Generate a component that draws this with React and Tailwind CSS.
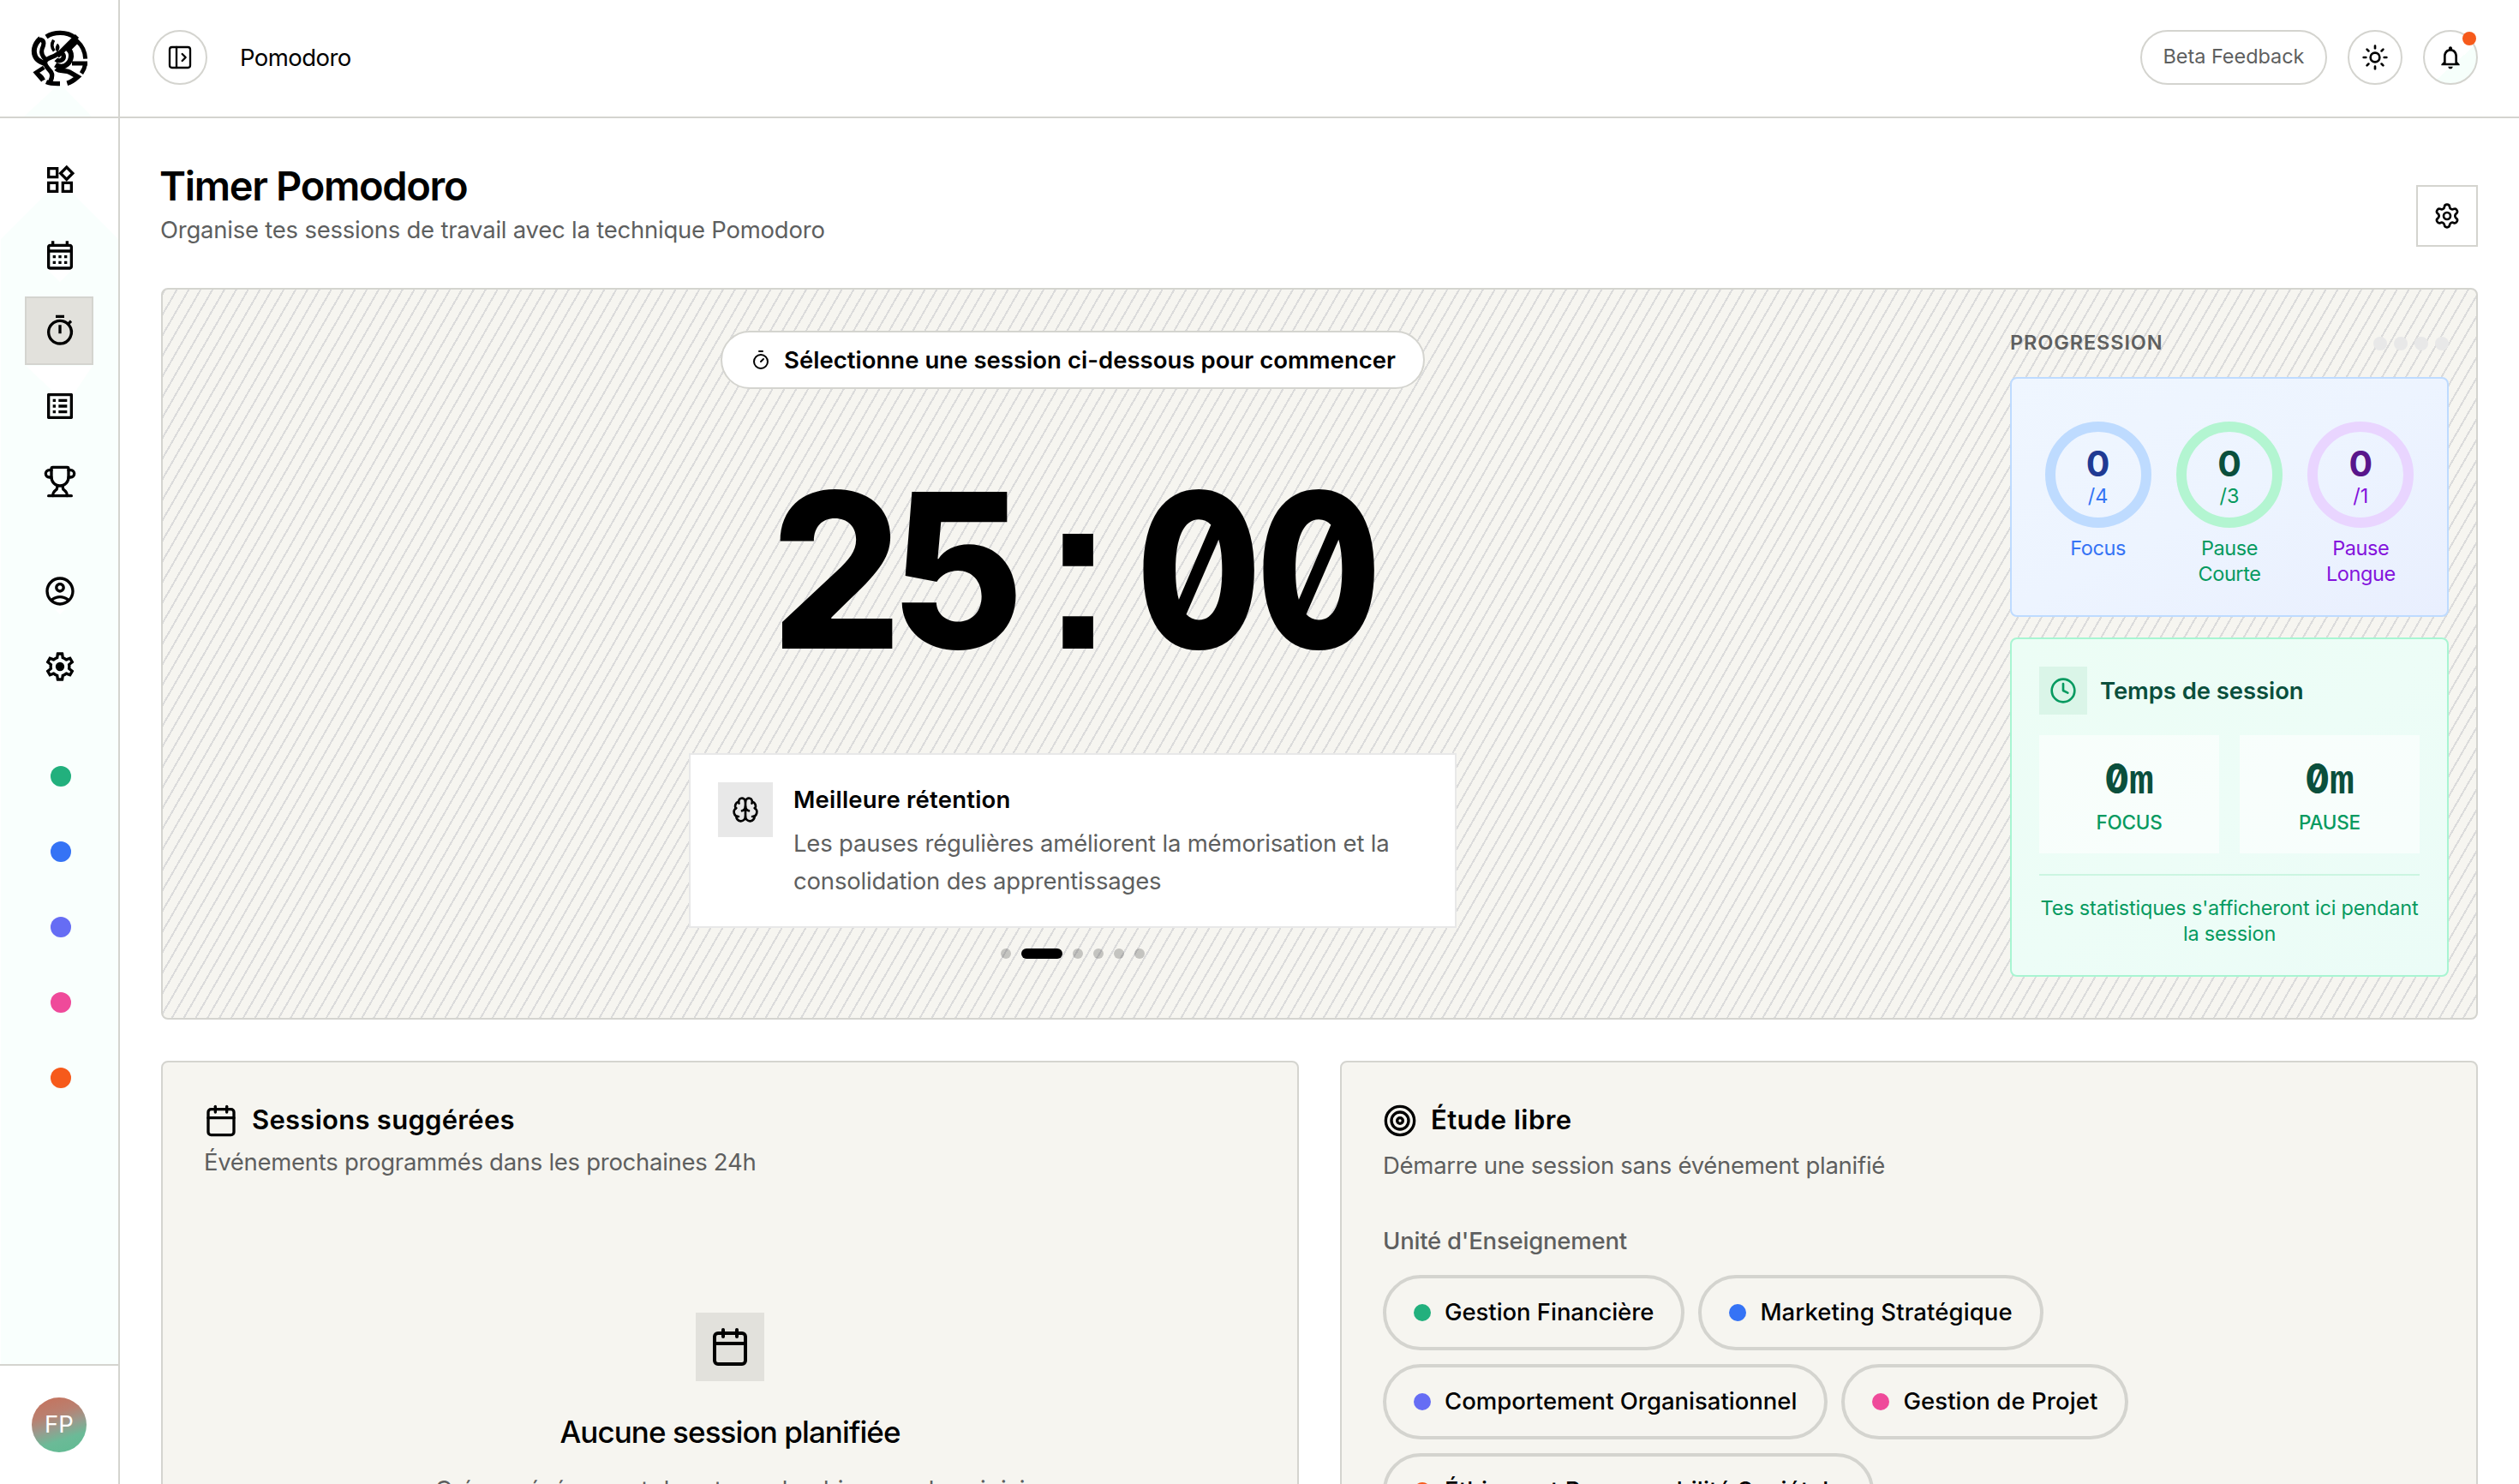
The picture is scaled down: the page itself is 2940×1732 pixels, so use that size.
import React, { useState } from "react";
import { Brain, Calendar, Clock, PanelLeftOpen, Settings, Sun, Target, Timer, Trophy } from "lucide-react";
import {
  MdOutlineWidgets,
  MdOutlineCalendarMonth,
  MdOutlineTimer,
  MdOutlineListAlt,
  MdOutlineAccountCircle,
  MdNotificationsNone,
} from "react-icons/md";

const courses = [
  { name: "Gestion Financière", dot: "bg-[#22b07d]", tracking: "tracking-[-0.002em]" },
  { name: "Marketing Stratégique", dot: "bg-[#3573f5]", tracking: "tracking-[0.004em]" },
  { name: "Comportement Organisationnel", dot: "bg-[#666df4]", tracking: "tracking-[-0.0005em]" },
  { name: "Gestion de Projet", dot: "bg-[#ef4a9a]", tracking: "tracking-[0.003em]" },
  { name: "Éthique et Responsabilité Sociétale", dot: "bg-[#f65a1b]", tracking: "tracking-[0.0045em]" },
];

const rings = [
  { label: "Focus", total: 4, stroke: "stroke-[#bedbff]", value: "text-[#1f3a93]", text: "text-[#3573f5]" },
  { label: "Pause Courte", total: 3, stroke: "stroke-[#b3f5d1]", value: "text-[#0a4f3c]", text: "text-[#069a60]" },
  { label: "Pause Longue", total: 1, stroke: "stroke-[#e9d5ff]", value: "text-[#59168b]", text: "text-[#8413dc]" },
];

function Logo() {
  return (
    <svg viewBox="0 0 216 216" className="size-[72px]" fill="none" stroke="black" strokeWidth="16">
      <path d="M60 33 C86 15 132 13 160 36" />
      <path d="M168 30 L98 100" strokeWidth="18" />
      <path d="M86 44 C77 58 78 70 88 82" strokeWidth="11" />
      <path d="M99 56 C110 64 108 76 98 86 C89 76 92 66 99 56Z" fill="black" stroke="none" />
      <path d="M40 38 C16 60 12 86 24 106 C31 118 42 121 56 127" strokeWidth="18" />
      <path d="M38 42 C58 46 50 64 45 76 C41 90 47 102 58 112" strokeWidth="15" />
      <path d="M132 84 L168 48 C186 64 196 86 197 110" strokeWidth="15" />
      <path d="M140 78 C154 96 146 124 126 134 C110 141 100 136 92 131" strokeWidth="18" />
      <path
        d="M94 112 C104 122 122 114 121 100 C119 88 104 88 96 95 C84 106 62 105 56 120 C53 134 67 142 77 157 C86 172 76 182 72 194"
        strokeWidth="16"
      />
      <path d="M60 191 C76 198 90 197 108 197" />
      <path d="M94 144 C108 157 130 148 144 158 L170 173 C158 184 150 191 133 196" strokeWidth="17" />
      <path d="M150 126 L204 126" strokeWidth="15" />
      <path d="M197 126 C195 141 190 151 183 161" strokeWidth="15" />
      <path d="M52 140 L24 158 L48 186" strokeWidth="14" />
      <path d="M26 158 C34 164 46 168 52 184" strokeWidth="10" />
    </svg>
  );
}

function SettingsGear() {
  return (
    <svg viewBox="0 0 24 24" className="size-10" fill="currentColor">
      <path
        fillRule="evenodd"
        d="M19.43 12.98c.04-.32.07-.64.07-.98 0-.34-.03-.66-.07-.98l2.11-1.65c.19-.15.24-.42.12-.64l-2-3.46a.5.5 0 0 0-.61-.22l-2.49 1c-.52-.4-1.08-.73-1.69-.98l-.38-2.65A.488.488 0 0 0 14 2h-4c-.25 0-.46.18-.49.42l-.38 2.65c-.61.25-1.17.59-1.69.98l-2.49-1a.566.566 0 0 0-.18-.03c-.17 0-.34.09-.43.25l-2 3.46c-.13.22-.07.49.12.64l2.11 1.65c-.04.32-.07.65-.07.98 0 .33.03.66.07.98l-2.11 1.65c-.19.15-.24.42-.12.64l2 3.46a.5.5 0 0 0 .61.22l2.49-1c.52.4 1.08.73 1.69.98l.38 2.65c.03.24.24.42.49.42h4c.25 0 .46-.18.49-.42l.38-2.65c.61-.25 1.17-.59 1.69-.98l2.49 1c.06.02.12.03.18.03.17 0 .34-.09.43-.25l2-3.46c.12-.22.07-.49-.12-.64l-2.11-1.65zm-1.98-1.71c.04.31.05.52.05.73 0 .21-.02.43-.05.73l-.14 1.13.89.7 1.08.84-.7 1.21-1.27-.51-1.04-.42-.9.68c-.43.32-.84.56-1.25.73l-1.06.43-.16 1.13-.2 1.35h-1.4l-.19-1.35-.16-1.13-1.06-.43c-.43-.18-.83-.41-1.23-.71l-.91-.7-1.06.43-1.27.51-.7-1.21 1.08-.84.89-.7-.14-1.13c-.03-.31-.05-.54-.05-.74s.02-.43.05-.73l.14-1.13-.89-.7-1.08-.84.7-1.21 1.27.51 1.04.42.9-.68c.43-.32.84-.56 1.25-.73l1.06-.43.16-1.13.2-1.35h1.39l.19 1.35.16 1.13 1.06.43c.43.18.83.41 1.23.71l.91.7 1.06-.43 1.27-.51.7 1.21-1.07.85-.89.7.14 1.13z"
      />
      <circle cx="12" cy="12" r="3.1" />
    </svg>
  );
}

function MonoText({ text, cell }) {
  return (
    <span className="flex items-baseline justify-center">
      {text.split("").map((char, i) => (
        <span key={i} className={`flex justify-center ${cell}`}>
          {char === "0" ? (
            <span className="block scale-x-[0.84] font-extrabold slashed-zero">{char}</span>
          ) : /\d/.test(char) ? (
            <span className="block scale-x-[0.95] font-extrabold">{char}</span>
          ) : (
            <span className="block font-['Liberation_Mono',monospace] font-bold">{char}</span>
          )}
        </span>
      ))}
    </span>
  );
}

function NavItem({ active, children }) {
  return (
    <a
      className={`flex size-20 items-center justify-center pl-[2px] ${
        active ? "border-2 border-[#d4d4cf] bg-[#e2e1dc]" : ""
      }`}
    >
      {children}
    </a>
  );
}

function Sidebar() {
  return (
    <aside className="relative flex w-[140px] shrink-0 flex-col border-r-2 border-[#d4d4cf] bg-white">
      <svg className="absolute top-0 left-0 h-[1592px] w-[138px]" viewBox="0 0 138 1592" fill="#f9fffd">
        <path d="M67 100 L28 136 H107 L72 100Z" />
        <path
          fillRule="evenodd"
          d="M54 226 L1 279 V1592 H138 V279 L85 226Z M55 315 L70 329 L84 315Z M30 427 L78 472 L108 427Z M64 711 L70 717 L76 711Z M64 797 L70 803 L76 797Z"
        />
      </svg>
      <div className="relative flex h-[138px] items-center justify-center border-b-2 border-[#d4d4cf] pl-[2px]">
        <Logo />
      </div>
      <nav className="relative flex flex-1 flex-col items-center gap-2 pt-8">
        <NavItem>
          <MdOutlineWidgets size={40} />
        </NavItem>
        <NavItem>
          <MdOutlineCalendarMonth size={40} />
        </NavItem>
        <NavItem active>
          <MdOutlineTimer size={40} />
        </NavItem>
        <NavItem>
          <MdOutlineListAlt size={40} />
        </NavItem>
        <NavItem>
          <Trophy size={40} />
        </NavItem>
        <div className="h-8" />
        <NavItem>
          <MdOutlineAccountCircle size={40} />
        </NavItem>
        <NavItem>
          <SettingsGear />
        </NavItem>
        <div className="h-8" />
        {courses.map((course) => (
          <NavItem key={course.name}>
            <span className={`ml-[2px] size-6 rounded-full ${course.dot}`} />
          </NavItem>
        ))}
      </nav>
      <div className="relative flex h-[140px] items-center justify-center border-t-2 border-[#d4d4cf]">
        <div className="flex size-16 items-center justify-center rounded-full bg-[linear-gradient(162deg,#c4745f_8%,#b98070_32%,#999b8e_52%,#6bba97_72%,#5fbb92_100%)] text-[27.5px] text-white">
          FP
        </div>
      </div>
    </aside>
  );
}

function TopBar() {
  return (
    <header className="flex h-[138px] shrink-0 items-center justify-between border-b-2 border-[#d4d4cf] pr-12 pb-[2px] pl-[38px]">
      <div className="flex items-center">
        <button className="flex size-16 items-center justify-center rounded-full border-2 border-[#d4d4cf]">
          <PanelLeftOpen size={32} strokeWidth={1.75} />
        </button>
        <span className="ml-[38px] pt-[2px] text-[27.5px] tracking-[-0.02em]">Pomodoro</span>
      </div>
      <div className="flex items-center gap-6">
        <button className="flex h-16 w-[218px] items-center justify-center rounded-full border-2 border-[#d4d4cf] pb-[2px] text-[23.5px] tracking-[-0.002em] text-[#5e5f5f]">
          Beta Feedback
        </button>
        <button className="flex size-16 items-center justify-center rounded-full border-2 border-[#d4d4cf]">
          <Sun size={32} />
        </button>
        <button className="relative flex size-16 items-center justify-center rounded-full border-2 border-[#d4d4cf] bg-[linear-gradient(138deg,transparent_60%,#f6fffb_60%)]">
          <MdNotificationsNone size={32} />
          <span className="absolute top-0 right-0 size-4 rounded-full bg-[#f65a1b]" />
        </button>
      </div>
    </header>
  );
}

function TimerPanel() {
  const [tip] = useState(1);
  return (
    <div className="flex flex-1 flex-col items-center pt-4">
      <div className="flex h-[68px] w-[822px] items-center rounded-full border-2 border-[#d4d4cf] bg-white pl-[33px]">
        <Timer size={24} />
        <span className="ml-[15px] pt-[1px] text-[27.5px] font-semibold tracking-[0.001em] whitespace-nowrap">
          Sélectionne une session ci-dessous pour commencer
        </span>
      </div>
      <div className="mt-[84px] h-64 pl-3 text-[252px] leading-[256px]">
        <MonoText text="25:00" cell="w-[140.8px]" />
      </div>
      <div className="mt-[85px] flex h-[204px] w-[896px] gap-6 border-2 border-[#e8e8e8] bg-white p-8">
        <div className="flex size-16 shrink-0 items-center justify-center bg-[#e8e8e8]">
          <Brain size={32} />
        </div>
        <div className="whitespace-nowrap">
          <h3 className="text-[27.5px] leading-10 font-semibold tracking-[0.008em]">Meilleure rétention</h3>
          <p className="mt-[9px] text-[27.5px] leading-[44px] tracking-[-0.0065em] text-[#5e5f5f]">
            Les pauses régulières améliorent la mémorisation et la
            <br />
            consolidation des apprentissages
          </p>
        </div>
      </div>
      <div className="mt-6 flex gap-3">
        {[0, 1, 2, 3, 4, 5].map((i) => (
          <span key={i} className={i === tip ? "h-3 w-12 rounded-full bg-black" : "size-3 rounded-full bg-black/20"} />
        ))}
      </div>
    </div>
  );
}

function ProgressPanel() {
  return (
    <div className="flex w-[512px] flex-col">
      <div className="flex h-[60px] items-center justify-between">
        <h3 className="text-[23.5px] font-semibold tracking-[0.038em] text-[#5e5f5f]">PROGRESSION</h3>
        <div className="flex gap-2 pt-[2px]">
          {[0, 1, 2, 3].map((i) => (
            <span key={i} className="size-4 rounded-full bg-[#e8e8e8]" />
          ))}
        </div>
      </div>

      <div className="mt-[10px] grid h-[280px] grid-cols-3 gap-4 rounded-[8px] border-2 border-[#bedbff] bg-linear-to-br from-[#eff6ff] via-[#edf4ff] to-[#e9effe] px-8 pt-12">
        {rings.map((ring) => (
          <div key={ring.label} className="flex flex-col items-center">
            <div className="relative size-32">
              <svg viewBox="0 0 128 128" fill="none" className="size-32">
                <circle cx="64" cy="64" r="56" strokeWidth="12" className={ring.stroke} />
              </svg>
              <div className="absolute inset-0 flex flex-col items-center pt-[31px]">
                <span className={`text-[41px] leading-10 font-bold ${ring.value}`}>0</span>
                <span className={`mt-[2px] text-[23.5px] leading-8 ${ring.text}`}>/{ring.total}</span>
              </div>
            </div>
            <p className={`mt-[7px] w-[90px] text-center text-[23.5px] leading-[30px] tracking-[-0.018em] ${ring.text}`}>
              {ring.label}
            </p>
          </div>
        ))}
      </div>

      <div className="mt-6 h-[396px] rounded-[8px] border-2 border-[#a8f5d2] bg-linear-to-br from-[#ecfdf5] via-[#edfdf7] to-[#ebfcf7] p-8">
        <div className="flex items-center gap-[15px]">
          <div className="flex size-14 items-center justify-center bg-[#daf5e8] text-[#069a60]">
            <Clock size={32} />
          </div>
          <h3 className="pt-[1px] text-[27.5px] font-semibold tracking-[-0.003em] text-[#0a4f3c]">Temps de session</h3>
        </div>
        <div className="mt-6 grid grid-cols-2 gap-6">
          {["FOCUS", "PAUSE"].map((label) => (
            <div key={label} className="h-[138px] bg-white/60 pt-[27px] text-center">
              <div className="h-12 text-[48px] leading-[48px] text-[#0a4f3c]">
                <MonoText text="0m" cell="w-[28.8px]" />
              </div>
              <div className="mt-[15px] text-[22.5px] leading-6 font-medium tracking-[-0.01em] text-[#069a60]">{label}</div>
            </div>
          ))}
        </div>
        <p className="mt-6 border-t-2 border-[#cbf5e1] pt-[23px] text-center text-[23.5px] leading-[30px] tracking-[-0.008em] text-[#069a60]">
          Tes statistiques s'afficheront ici pendant la session
        </p>
      </div>
    </div>
  );
}

function SuggestedSessions() {
  return (
    <section className="h-[700px] rounded-[8px] border-2 border-[#d4d4cf] bg-[#f6f5f0] p-12">
      <div className="flex h-10 items-center gap-4">
        <Calendar size={40} />
        <h2 className="pb-[1px] text-[31px] font-semibold tracking-[0.009em]">Sessions suggérées</h2>
      </div>
      <p className="mt-2 text-[27.5px] leading-10 tracking-[-0.0105em] text-[#5e5f5f]">
        Événements programmés dans les prochaines 24h
      </p>
      <div className="mt-[156px] flex flex-col items-center">
        <div className="flex size-20 items-center justify-center bg-[#e2e1dc]">
          <Calendar size={48} />
        </div>
        <h3 className="mt-[35px] text-[35px] leading-[48px] font-medium tracking-[-0.026em]">Aucune session planifiée</h3>
        <p className="mt-[23px] text-[27.5px] leading-10 tracking-[-0.0105em] text-[#5e5f5f]">
          Crée un événement dans ton calendrier pour le voir ici
        </p>
      </div>
    </section>
  );
}

function FreeStudy() {
  return (
    <section className="h-[700px] rounded-[8px] border-2 border-[#d4d4cf] bg-[#f6f5f0] p-12">
      <div className="flex h-10 items-center gap-4">
        <Target size={40} />
        <h2 className="pb-[1px] text-[31px] font-semibold tracking-[0.014em]">Étude libre</h2>
      </div>
      <p className="mt-3 text-[27.5px] leading-10 tracking-[-0.01em] text-[#5e5f5f]">
        Démarre une session sans événement planifié
      </p>
      <p className="mt-12 text-[27.5px] leading-10 font-medium tracking-[-0.008em] text-[#5e5f5f]">Unité d'Enseignement</p>
      <div className="mt-5 flex w-[1000px] flex-wrap gap-4">
        {courses.map((course) => (
          <button
            key={course.name}
            className={`flex h-[88px] items-center gap-4 rounded-full border-4 border-[#d4d4cf] px-8 text-[27.5px] font-medium ${course.tracking}`}
          >
            <span className={`size-5 rounded-full ${course.dot}`} />
            {course.name}
          </button>
        ))}
      </div>
    </section>
  );
}

export default function App() {
  return (
    <div className="flex h-[1732px] w-full overflow-hidden bg-white font-['Inter','Liberation_Sans',sans-serif] text-black">
      <Sidebar />
      <div className="flex min-w-0 flex-1 flex-col">
        <TopBar />
        <main className="px-12 pt-[51px]">
          <div className="flex items-end justify-between">
            <div>
              <h1 className="-ml-[2px] text-[47px] leading-[56px] font-semibold tracking-[-0.028em]">Timer Pomodoro</h1>
              <p className="-ml-px mt-[3px] text-[27.5px] leading-10 tracking-[-0.0085em] text-[#5e5f5f]">
                Organise tes sessions de travail avec la technique Pomodoro
              </p>
            </div>
            <button className="flex size-[72px] items-center justify-center border-2 border-[#d4d4cf]">
              <Settings size={32} />
            </button>
          </div>

          <section className="mt-12 flex h-[854px] gap-16 rounded-[8px] border-2 border-[#d4d4cf] bg-[#f6f5f0] bg-[repeating-linear-gradient(-60deg,#dbdbdb,#dbdbdb_2px,transparent_2px,transparent_12px)] p-8">
            <TimerPanel />
            <ProgressPanel />
          </section>

          <div className="mt-12 grid grid-cols-2 gap-12">
            <SuggestedSessions />
            <FreeStudy />
          </div>
        </main>
      </div>
    </div>
  );
}
